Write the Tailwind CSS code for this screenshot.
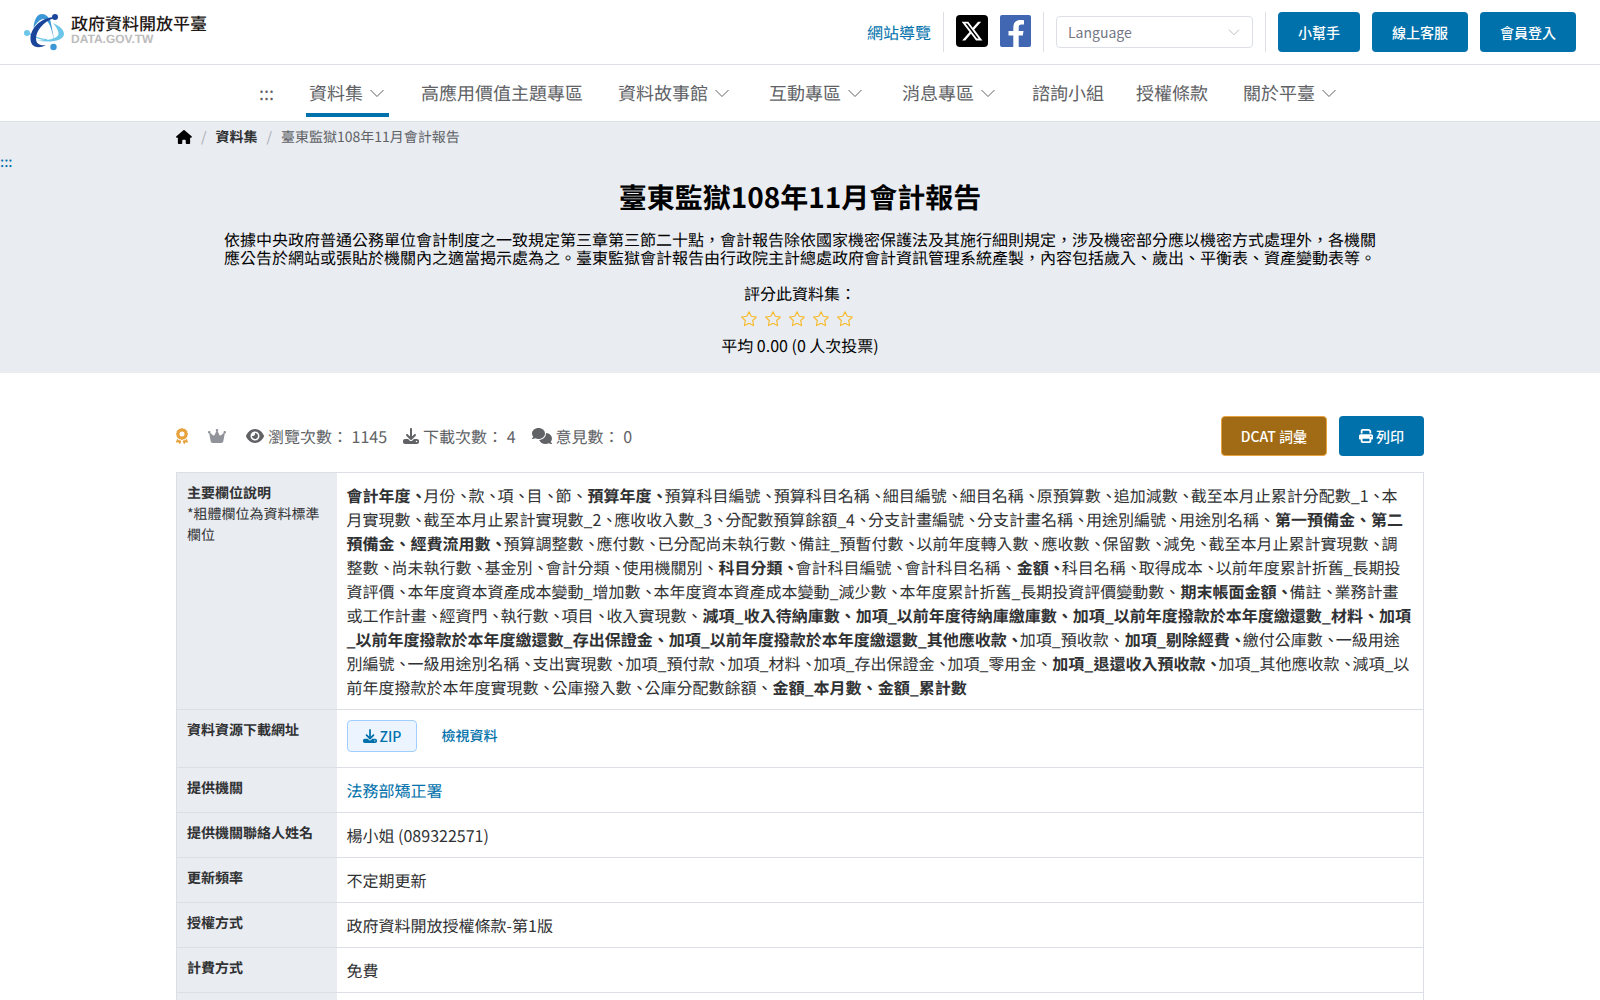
<!DOCTYPE html>
<html lang="zh-Hant">
<head>
  <meta charset="UTF-8" />
  <meta name="viewport" content="width=device-width, initial-scale=1.0" />
  <title>臺東監獄108年11月會計報告 | 政府資料開放平臺</title>
  <script src="https://cdn.jsdelivr.net/npm/@tailwindcss/browser@4"></script>
</head>
<body class="bg-white text-base text-[#303133] antialiased font-['Noto_Sans_CJK_TC',sans-serif] [text-rendering:geometricPrecision]">

  <!-- icon sprite -->
  <svg class="hidden" aria-hidden="true">
    <symbol id="chevron" viewBox="0 0 18 18"><path d="M2.500 6 9 12.500 15.500 6" fill="none" stroke="currentColor" stroke-width="1" /></symbol>
    <symbol id="star" viewBox="0 0 16 16"><path d="M8 .7l2.200 4.500 5.200.8-3.700 3.500.9 5.100L8 12.300l-4.600 2.300.9-5.100L.6 6l5.200-.8z" fill="none" stroke="currentColor" stroke-width="1.100" stroke-linejoin="round" /></symbol>
    <symbol id="download" viewBox="0 0 512 512"><path fill="currentColor" d="M288 32c0-17.7-14.3-32-32-32s-32 14.3-32 32V274.7l-73.4-73.4c-12.5-12.5-32.8-12.5-45.3 0s-12.5 32.8 0 45.3l128 128c12.5 12.5 32.8 12.5 45.3 0l128-128c12.5-12.5 12.5-32.8 0-45.3s-32.8-12.5-45.3 0L288 274.7V32zM64 352c-35.3 0-64 28.7-64 64v32c0 35.3 28.7 64 64 64H448c35.3 0 64-28.7 64-64V416c0-35.3-28.7-64-64-64H346.5l-45.3 45.3c-25 25-65.5 25-90.5 0L165.5 352H64zm368 56a24 24 0 1 1 0 48 24 24 0 1 1 0-48z" /></symbol>
  </svg>

  <header>
    <div class="flex h-16 items-center justify-between px-6">
      <a href="#" class="flex items-center gap-[7px]">
        <svg class="h-[38px] w-10" viewBox="0 0 40 38">
          <path d="M9.500 15C10 7 13 1 18 1c4 0 6.500 3 8.500 7l4.500 23C28 17 25 6 19.500 6 16 6 12.500 10 9.500 15z" fill="#3b97d6" />
          <path d="M29 10c7 3 11 7 11 11 0 7-14 9-27 6.500 11 0 21-2 21.500-6.500.2-3-2-7-5.500-11z" fill="#6cc6e8" />
          <path d="M4 19.500c5 4 12 7 19 7" fill="none" stroke="#6cc6e8" stroke-width="1.200" />
          <path d="M30 4C17 5 6 15 6.500 26.500 7 34 14 36.500 22 32c-6 1-10-1-10-6.500C12 18 19 9 30 5z" fill="#1b459b" />
          <circle cx="31" cy="4" r="3" fill="#1b459b" />
          <circle cx="3" cy="20" r="3" fill="#6cc6e8" />
          <circle cx="29.500" cy="34" r="3.200" fill="#3b97d6" />
        </svg>
        <span class="flex flex-col pb-1.5">
          <span class="text-[17px] leading-5 font-medium text-[#231815]">政府資料開放平臺</span>
          <span class="font-['Liberation_Sans',sans-serif] text-xs leading-3 font-bold text-[#bcbcbd]">DATA.GOV.TW</span>
        </span>
      </a>

      <div class="flex items-center gap-3">
        <a href="#" class="text-[#0071ab]">網站導覽</a>
        <span class="h-10 w-px bg-[#dcdfe6]"></span>
        <a href="#" aria-label="X" class="pb-0.5">
          <svg class="size-8" viewBox="0 0 32 32"><rect width="32" height="32" rx="4" fill="#000" /><path transform="translate(4.500 4.500) scale(.96)" fill="#fff" d="M18.244 2.250h3.308l-7.227 8.260 8.502 11.240H16.170l-5.214-6.817L4.990 21.750H1.680l7.730-8.835L1.254 2.250H8.080l4.713 6.231zm-1.161 17.520h1.833L7.084 4.126H5.117z" /></svg>
        </a>
        <a href="#" aria-label="Facebook" class="pb-0.5">
          <svg class="h-8 w-[31px]" viewBox="0 0 31 32"><rect width="31" height="32" rx="2" fill="#4267b2" /><path fill="#fff" d="M13.300 32V20.500H8.500v-4.500h4.800v-3.600c0-5 3-7.400 7.200-7.400 1.500 0 2.900.1 3.500.2v4.200h-2.600c-2.100 0-2.700 1.200-2.700 2.700v3.900h4.800l-.7 4.500h-4.100V32z" /></svg>
        </a>
        <span class="h-10 w-px bg-[#dcdfe6]"></span>
        <div class="relative">
          <select aria-label="Language" class="h-8 w-[197px] appearance-none rounded border border-[#dcdfe6] bg-white px-[11px] text-sm text-[#757886]">
            <option>Language</option>
          </select>
          <svg class="pointer-events-none absolute top-[9px] right-3 size-[14px] text-[#a8abb2]"><use href="#chevron" /></svg>
        </div>
        <span class="h-10 w-px bg-[#dcdfe6]"></span>
        <button class="h-10 rounded bg-[#0071ab] px-5 text-sm font-medium text-white">小幫手</button>
        <button class="h-10 rounded bg-[#0071ab] px-5 text-sm font-medium text-white">線上客服</button>
        <button class="h-10 rounded bg-[#0071ab] px-5 text-sm font-medium text-white">會員登入</button>
      </div>
    </div>

    <nav class="flex h-[58px] items-center justify-center gap-8 border-y border-[#dcdfe6] text-lg leading-7 text-[#606266]">
      <a href="#">:::</a>
      <a href="#" class="flex items-center gap-[5px] border-y-4 border-t-transparent border-b-[#0071ab] px-[3px] py-1.5"><span>資料集</span><svg class="size-[18px]"><use href="#chevron" /></svg></a>
      <a href="#">高應用價值主題專區</a>
      <a href="#" class="flex items-center gap-[5px] px-[3px]"><span>資料故事館</span><svg class="size-[18px]"><use href="#chevron" /></svg></a>
      <a href="#" class="flex items-center gap-[5px] px-[3px]"><span>互動專區</span><svg class="size-[18px]"><use href="#chevron" /></svg></a>
      <a href="#" class="flex items-center gap-[5px] px-[3px]"><span>消息專區</span><svg class="size-[18px]"><use href="#chevron" /></svg></a>
      <a href="#">諮詢小組</a>
      <a href="#">授權條款</a>
      <a href="#" class="flex items-center gap-[5px] px-[3px]"><span>關於平臺</span><svg class="size-[18px]"><use href="#chevron" /></svg></a>
    </nav>
  </header>

  <main>
    <section class="bg-[#e9ecf1] pb-4 text-black">
      <div class="mx-auto flex h-[30px] max-w-[1248px] items-center text-sm text-[#606266]">
        <a href="#" aria-label="首頁" class="text-black">
          <svg class="h-[14px] w-4" viewBox="0 0 576 512"><path fill="currentColor" d="M575.8 255.5c0 18-15 32.1-32 32.1h-32l.7 160.2c0 2.700-.2 5.400-.5 8.100V472c0 22.100-17.900 40-40 40H392c-22.100 0-40-17.900-40-40V384c0-17.700-14.300-32-32-32H256c-17.700 0-32 14.300-32 32v88c0 22.100-17.900 40-40 40H104c-22.100 0-40-17.900-40-40V287.600H32c-18 0-32-14-32-32.100c0-9 3-17 10-24L266.400 8c7-7 15-8 22-8s15 2 21 7L564.800 231.500c8 7 12 15 11 24z" /></svg>
        </a>
        <span class="mx-[9px] text-[#a8abb2]">/</span>
        <a href="#" class="font-bold text-[#303133]">資料集</a>
        <span class="mx-[9px] text-[#a8abb2]">/</span>
        <span>臺東監獄108年11月會計報告</span>
      </div>
      <a href="#" class="block w-fit text-sm leading-5 font-medium text-[#0071ab]">:::</a>
      <div class="mx-auto max-w-6xl text-center">
        <h1 class="mt-[7px] text-[28px] leading-9 font-bold">臺東監獄108年11月會計報告</h1>
        <p class="mt-[15px] text-left leading-[18px]">依據中央政府普通公務單位會計制度之一致規定第三章第三節二十點，會計報告除依國家機密保護法及其施行細則規定，涉及機密部分應以機密方式處理外，各機關應公告於網站或張貼於機關內之適當揭示處為之。臺東監獄會計報告由行政院主計總處政府會計資訊管理系統產製，內容包括歲入、歲出、平衡表、資產變動表等。</p>
        <div class="mt-[15px] leading-6">
          <div>評分此資料集：</div>
          <div class="mr-1.5 flex h-7 items-center justify-center gap-2 text-[#f7ba2a]">
            <button aria-label="1 星"><svg class="size-4"><use href="#star" /></svg></button>
            <button aria-label="2 星"><svg class="size-4"><use href="#star" /></svg></button>
            <button aria-label="3 星"><svg class="size-4"><use href="#star" /></svg></button>
            <button aria-label="4 星"><svg class="size-4"><use href="#star" /></svg></button>
            <button aria-label="5 星"><svg class="size-4"><use href="#star" /></svg></button>
          </div>
          <div>平均 0.00 (0 人次投票)</div>
        </div>
      </div>
    </section>

    <section class="mx-auto max-w-[1248px] pt-[43px]">
      <div class="flex items-center justify-between">
        <div class="flex items-center text-[#606266]">
          <svg class="mr-5 h-4 w-3 text-[#e6a23c]" viewBox="0 0 384 512"><path fill="currentColor" d="M173.800 5.500c11-7.300 25.400-7.300 36.400 0L228 17.200c6 3.900 13 5.800 20.100 5.400l21.300-1.300c13.200-.8 25.600 6.400 31.500 18.200l9.600 19.100c3.200 6.400 8.400 11.500 14.700 14.700L344.500 83c11.800 5.900 19 18.300 18.200 31.500l-1.300 21.300c-.4 7.100 1.500 14.200 5.400 20.100l11.800 17.800c7.300 11 7.300 25.400 0 36.400L366.800 228c-3.900 6-5.800 13-5.400 20.100l1.300 21.300c.8 13.200-6.400 25.600-18.200 31.500l-19.100 9.600c-6.400 3.200-11.500 8.400-14.700 14.700L301 344.500c-5.900 11.800-18.300 19-31.500 18.200l-21.300-1.300c-7.100-.4-14.200 1.500-20.100 5.400l-17.800 11.800c-11 7.300-25.400 7.300-36.400 0L156 366.800c-6-3.900-13-5.800-20.100-5.400l-21.300 1.300c-13.200 .8-25.600-6.400-31.500-18.200l-9.600-19.100c-3.200-6.400-8.400-11.500-14.700-14.700L39.500 301c-11.800-5.900-19-18.300-18.200-31.500l1.300-21.300c.4-7.100-1.500-14.200-5.400-20.100L5.500 210.200c-7.300-11-7.300-25.400 0-36.400L17.200 156c3.900-6 5.800-13 5.400-20.100l-1.300-21.300c-.8-13.200 6.400-25.600 18.200-31.500l19.100-9.600C65 70.200 70.200 65 73.400 58.600L83 39.500c5.900-11.800 18.300-19 31.500-18.200l21.300 1.300c7.100 .4 14.200-1.500 20.100-5.400L173.800 5.500zM272 192a80 80 0 1 0 -160 0 80 80 0 1 0 160 0zM1.300 441.800L44.400 339.300c.2 .1 .3 .2 .4 .4l9.600 19.100c11.700 23.200 36 37.300 62 35.800l21.300-1.300c.2 0 .5 0 .7 .2l17.800 11.800c5.100 3.300 10.500 5.900 16.100 7.700l-37.600 89.300c-2.300 5.500-7.400 9.200-13.300 9.700s-11.600-2.200-14.800-7.200L74.400 455.500l-56.100 8.300c-5.700 .8-11.400-1.500-15-6s-4.300-10.700-2.100-16zm248 60.400L211.700 413c5.600-1.800 11-4.300 16.100-7.700l17.800-11.800c.2-.1 .4-.2 .7-.2l21.300 1.300c26 1.500 50.300-12.600 62-35.800l9.600-19.100c.1-.2 .2-.3 .4-.4l43.200 102.500c2.200 5.300 1.400 11.400-2.100 16s-9.300 6.900-15 6l-56.100-8.300-32.200 49.200c-3.200 5-8.900 7.700-14.800 7.200s-11-4.300-13.300-9.700z" /></svg>
          <svg class="mr-5 h-4 w-[18px] text-[#909399]" viewBox="0 0 576 512"><path fill="currentColor" d="M309 106c11.400-7 19-19.700 19-34c0-22.100-17.900-40-40-40s-40 17.900-40 40c0 14.400 7.600 27 19 34L209.700 220.600c-9.100 18.200-32.700 23.400-48.600 10.700L72 160c5-6.700 8-15 8-24c0-22.100-17.900-40-40-40S0 113.900 0 136s17.900 40 40 40c.2 0 .5 0 .7 0L86.400 427.400c5.500 30.400 32 52.600 63 52.600l277.200 0c30.900 0 57.400-22.100 63-52.600L535.300 176c.2 0 .5 0 .7 0c22.100 0 40-17.900 40-40s-17.900-40-40-40s-40 17.900-40 40c0 9 3 17.300 8 24l-89.100 71.300c-15.900 12.700-39.500 7.500-48.600-10.700L309 106z" /></svg>
          <span class="mr-4 flex items-center gap-1">
            <svg class="h-4 w-[18px]" viewBox="0 0 576 512"><path fill="currentColor" d="M288 32c-80.800 0-145.500 36.800-192.600 80.600C48.600 156 17.300 208 2.500 243.700c-3.300 7.900-3.300 16.700 0 24.600C17.300 304 48.600 356 95.400 399.400C142.500 443.200 207.200 480 288 480s145.500-36.800 192.600-80.600c46.800-43.500 78.100-95.400 93-131.100c3.300-7.900 3.300-16.700 0-24.600c-14.900-35.700-46.200-87.700-93-131.100C433.500 68.800 368.800 32 288 32zM144 256a144 144 0 1 1 288 0 144 144 0 1 1 -288 0zm144-64c0 35.300-28.700 64-64 64c-7.100 0-13.900-1.200-20.300-3.300c-5.500-1.800-11.900 1.600-11.700 7.400c.3 6.900 1.300 13.800 3.200 20.700c13.700 51.200 66.400 81.600 117.600 67.900s81.600-66.400 67.900-117.600c-11.100-41.500-47.800-69.400-88.600-71.100c-5.800-.2-9.200 6.100-7.400 11.700c2.100 6.400 3.300 13.200 3.300 20.300z" /></svg>
            瀏覽次數： 1145
          </span>
          <span class="mr-4 flex items-center gap-1">
            <svg class="size-4"><use href="#download" /></svg>
            下載次數： 4
          </span>
          <span class="flex items-center gap-1">
            <svg class="h-4 w-5" viewBox="0 0 640 512"><path fill="currentColor" d="M208 352c114.900 0 208-78.800 208-176S322.900 0 208 0S0 78.800 0 176c0 38.600 14.700 74.300 39.600 103.400c-3.500 9.400-8.700 17.700-14.200 24.700c-4.800 6.200-9.700 11-13.300 14.300c-1.800 1.600-3.300 2.900-4.300 3.700c-.5 .4-.9 .7-1.100 .8l-.2 .2C1 327.200-1.400 334.400 .8 340.900S9.100 352 16 352c21.800 0 43.800-5.600 62.100-12.500c9.200-3.500 17.800-7.400 25.200-11.400C134.100 343.300 169.800 352 208 352zM448 176c0 112.300-99.100 196.900-216.500 207C255.800 457.400 336.400 512 432 512c38.200 0 73.900-8.700 104.700-23.900c7.500 4 16 7.900 25.200 11.400c18.300 6.900 40.300 12.500 62.100 12.500c6.900 0 13.100-4.500 15.200-11.100c2.100-6.600-.2-13.800-5.800-17.900l-.2-.2c-.2-.2-.6-.4-1.100-.8c-1-.8-2.500-2-4.300-3.700c-3.600-3.300-8.500-8.100-13.300-14.300c-5.500-7-10.700-15.400-14.200-24.700c24.900-29 39.600-64.700 39.600-103.400c0-92.800-84.900-168.900-192.600-175.500c.4 5.100 .6 10.300 .6 15.500z" /></svg>
            意見數： 0
          </span>
        </div>
        <div class="flex gap-3">
          <button class="h-10 rounded border border-[#e6a23c] bg-[#a16a14] px-[19px] text-sm font-medium text-white">DCAT 詞彙</button>
          <button class="flex h-10 items-center gap-[3px] rounded bg-[#0071ab] px-5 text-sm font-medium text-white">
            <svg class="size-[14px]" viewBox="0 0 512 512"><path fill="currentColor" d="M128 0C92.700 0 64 28.700 64 64v96h64V64H354.700L384 93.300V160h64V93.300c0-17-6.700-33.300-18.700-45.300L400 18.700C388 6.700 371.700 0 354.700 0H128zM384 352v32 64H128V384 368 352H384zm64 32h32c17.700 0 32-14.300 32-32V256c0-35.300-28.700-64-64-64H64c-35.300 0-64 28.700-64 64v96c0 17.700 14.300 32 32 32H64v64c0 35.300 28.700 64 64 64H384c35.300 0 64-28.700 64-64V384zM432 248a24 24 0 1 1 0 48 24 24 0 1 1 0-48z" /></svg>
            列印
          </button>
        </div>
      </div>

      <table class="mt-4 w-full table-fixed border-collapse border border-[#dcdfe6] [&_td]:p-[10px] [&_td]:align-top [&_th]:bg-[#e9ecf1] [&_th]:p-[10px] [&_th]:text-left [&_th]:align-top [&_th]:text-sm [&_th]:leading-[21px] [&_tr]:border-b [&_tr]:border-[#dcdfe6]">
        <colgroup><col class="w-40" /><col /></colgroup>
        <tbody>
          <tr>
            <th scope="row">主要欄位說明<br /><span class="font-normal">*粗體欄位為資料標準欄位</span></th>
            <td class="[&>span]:-ml-[3px]"><b>會計年度、</b><span>月份、</span><span>款、</span><span>項、</span><span>目、</span><span>節、</span><b>預算年度、</b><span>預算科目編號、</span><span>預算科目名稱、</span><span>細目編號、</span><span>細目名稱、</span><span>原預算數、</span><span>追加減數、</span><span>截至本月止累計分配數_1、</span><span>本月實現數、</span><span>截至本月止累計實現數_2、</span><span>應收收入數_3、</span><span>分配數預算餘額_4、</span><span>分支計畫編號、</span><span>分支計畫名稱、</span><span>用途別編號、</span><span>用途別名稱、</span><b>第一預備金、</b><b>第二預備金、</b><b>經費流用數、</b><span>預算調整數、</span><span>應付數、</span><span>已分配尚未執行數、</span><span>備註_預暫付數、</span><span>以前年度轉入數、</span><span>應收數、</span><span>保留數、</span><span>減免、</span><span>截至本月止累計實現數、</span><span>調整數、</span><span>尚未執行數、</span><span>基金別、</span><span>會計分類、</span><span>使用機關別、</span><b>科目分類、</b><span>會計科目編號、</span><span>會計科目名稱、</span><b>金額、</b><span>科目名稱、</span><span>取得成本、</span><span>以前年度累計折舊_長期投資評價、</span><span>本年度資本資產成本變動_增加數、</span><span>本年度資本資產成本變動_減少數、</span><span>本年度累計折舊_長期投資評價變動數、</span><b>期末帳面金額、</b><span>備註、</span><span>業務計畫或工作計畫、</span><span>經資門、</span><span>執行數、</span><span>項目、</span><span>收入實現數、</span><b>減項_收入待納庫數、</b><b>加項_以前年度待納庫繳庫數、</b><b>加項_以前年度撥款於本年度繳還數_材料、</b><b>加項_以前年度撥款於本年度繳還數_存出保證金、</b><b>加項_以前年度撥款於本年度繳還數_其他應收款、</b><span>加項_預收款、</span><b>加項_剔除經費、</b><span>繳付公庫數、</span><span>一級用途別編號、</span><span>一級用途別名稱、</span><span>支出實現數、</span><span>加項_預付款、</span><span>加項_材料、</span><span>加項_存出保證金、</span><span>加項_零用金、</span><b>加項_退還收入預收款、</b><span>加項_其他應收款、</span><span>減項_以前年度撥款於本年度實現數、</span><span>公庫撥入數、</span><span>公庫分配數餘額、</span><b>金額_本月數、</b><b>金額_累計數</b></td>
          </tr>
          <tr>
            <th scope="row">資料資源下載網址</th>
            <td>
              <div class="mb-[5px] flex h-8 items-center gap-6 text-sm font-medium text-[#0071ab]">
                <button class="flex h-8 items-center gap-[3px] rounded border border-[#a0cfff] bg-[#ecf5ff] px-[15px]">
                  <svg class="size-[14px]"><use href="#download" /></svg>
                  ZIP
                </button>
                <a href="#">檢視資料</a>
              </div>
            </td>
          </tr>
          <tr><th scope="row">提供機關</th><td><a href="#" class="text-[#0071ab]">法務部矯正署</a></td></tr>
          <tr><th scope="row">提供機關聯絡人姓名</th><td>楊小姐 (089322571)</td></tr>
          <tr><th scope="row">更新頻率</th><td>不定期更新</td></tr>
          <tr><th scope="row">授權方式</th><td>政府資料開放授權條款-第1版</td></tr>
          <tr><th scope="row">計費方式</th><td>免費</td></tr>
          <tr class="h-11"><th></th><td></td></tr>
        </tbody>
      </table>
    </section>
  </main>
</body>
</html>
